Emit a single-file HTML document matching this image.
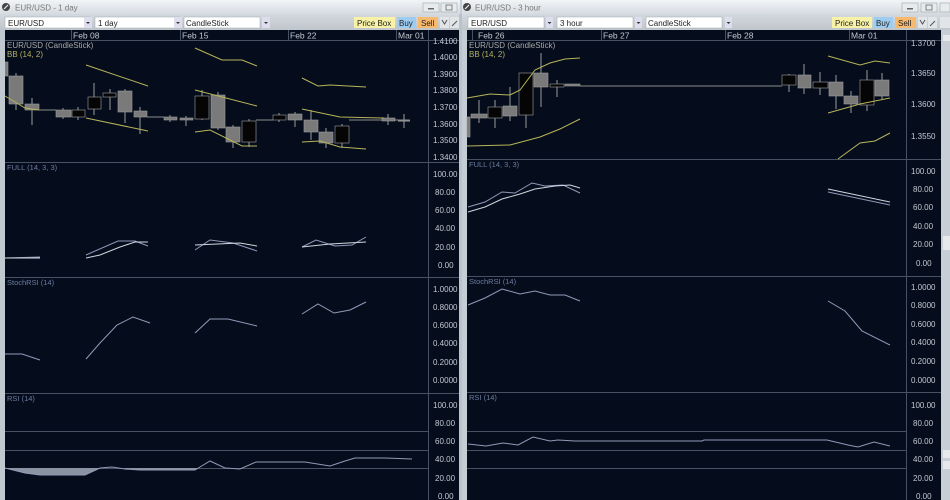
<!DOCTYPE html>
<html><head><meta charset="utf-8"><style>
html,body{margin:0;padding:0;width:950px;height:500px;overflow:hidden;background:#c4ccd4}
svg{display:block}
text{font-family:"Liberation Sans",sans-serif}
.ax{font-size:8px;fill:#c4c8d0}
.dt{font-size:8.5px;fill:#c4c8d0}
.ind{font-size:7.5px;fill:#6c7ca0}
.tb{font-size:8px;fill:#222}
.g{stroke:#465264;stroke-width:1;fill:none}
.cg{fill:#7a7a7a;stroke:#9a9a9a;stroke-width:0.6}
.cb{fill:#050505;stroke:#a0a0a0;stroke-width:0.6}
.w{stroke:#9a9a9a;stroke-width:1}
.bb{stroke:#b8b45a;stroke-width:1;fill:none}
.l1{stroke:#909ab8;stroke-width:1;fill:none}
.l2{stroke:#d0d6e0;stroke-width:1;fill:none}
</style></head><body>
<svg width="950" height="500" viewBox="0 0 950 500" xmlns="http://www.w3.org/2000/svg">
<defs>
<linearGradient id="tg" x1="0" y1="0" x2="0" y2="1"><stop offset="0" stop-color="#f2f4f6"/><stop offset="1" stop-color="#d6dbe1"/></linearGradient>
<linearGradient id="bg2" x1="0" y1="0" x2="0" y2="1"><stop offset="0" stop-color="#d4d9df"/><stop offset="1" stop-color="#bfc5cc"/></linearGradient>
</defs>
<rect width="950" height="500" fill="#c4ccd4"/>

<rect x="0" y="0" width="460" height="14" fill="url(#tg)"/>
<circle cx="6" cy="7" r="4" fill="#444"/><path d="M4 9 L8 5" stroke="#eee" stroke-width="1.2"/>
<text x="15" y="10.5" font-size="8" fill="#777">EUR/USD - 1 day</text>
<rect x="423" y="3" width="16" height="9" fill="#e8ebee" stroke="#9aa" stroke-width="0.6"/><rect x="428" y="8" width="6" height="1.5" fill="#666"/>
<rect x="441" y="3" width="16" height="9" fill="#e8ebee" stroke="#9aa" stroke-width="0.6"/><rect x="446" y="5" width="6" height="5" fill="none" stroke="#666" stroke-width="0.8"/>
<rect x="0" y="14" width="460" height="16" fill="url(#bg2)"/>
<rect x="5" y="17" width="85" height="11" fill="#fff" stroke="#9aa" stroke-width="0.5"/><rect x="84" y="17" width="8" height="11" fill="#dde"/><path d="M86 22h4l-2 2z" fill="#333"/>
<text x="8" y="26" class="tb">EUR/USD</text>
<rect x="95" y="17" width="85" height="11" fill="#fff" stroke="#9aa" stroke-width="0.5"/><rect x="174" y="17" width="8" height="11" fill="#dde"/><path d="M176 22h4l-2 2z" fill="#333"/>
<text x="98" y="26" class="tb">1 day</text>
<rect x="184" y="17" width="76" height="11" fill="#fff" stroke="#9aa" stroke-width="0.5"/><rect x="262" y="17" width="8" height="11" fill="#dde"/><path d="M264 22h4l-2 2z" fill="#333"/>
<text x="186" y="26" class="tb">CandleStick</text>
<rect x="354" y="17" width="41" height="11" fill="#f8f2a6"/><text x="357" y="26" class="tb">Price Box</text>
<rect x="397" y="17" width="19" height="11" fill="#9ccdf0"/><text x="399" y="26" class="tb" fill="#1a3a80">Buy</text>
<rect x="418" y="17" width="20" height="11" fill="#f6b96e"/><text x="421" y="26" class="tb">Sell</text>
<rect x="440" y="17" width="9" height="11" fill="#e2e5e8"/><path d="M442 20l2.5 4 2.5-4" stroke="#555" fill="none"/>
<rect x="450" y="17" width="9" height="11" fill="#e2e5e8"/><path d="M452 26l5-5" stroke="#555"/>

<rect x="5" y="30" width="454" height="470" fill="#050d1c"/>
<line x1="5" y1="40.5" x2="459" y2="40.5" class="g"/>
<line x1="428.5" y1="30" x2="428.5" y2="500" class="g"/>
<line x1="71.5" y1="30" x2="71.5" y2="40" class="g"/><line x1="180.5" y1="30" x2="180.5" y2="40" class="g"/><line x1="288.5" y1="30" x2="288.5" y2="40" class="g"/><line x1="396.5" y1="30" x2="396.5" y2="40" class="g"/>
<text x="73" y="38.5" class="dt">Feb 08</text><text x="182" y="38.5" class="dt">Feb 15</text><text x="290" y="38.5" class="dt">Feb 22</text><text x="398" y="38.5" class="dt">Mar 01</text>
<line x1="5" y1="162.5" x2="459" y2="162.5" class="g"/><line x1="5" y1="277.5" x2="459" y2="277.5" class="g"/><line x1="5" y1="393.5" x2="459" y2="393.5" class="g"/>
<line x1="5" y1="431.5" x2="428" y2="431.5" class="g"/><line x1="5" y1="450.5" x2="428" y2="450.5" class="g"/><line x1="5" y1="468.5" x2="428" y2="468.5" class="g"/>
<g class="ax">
<text x="433" y="44">1.4100</text><text x="433" y="60">1.4000</text><text x="433" y="77">1.3900</text><text x="433" y="93">1.3800</text><text x="433" y="110">1.3700</text><text x="433" y="127">1.3600</text><text x="433" y="143">1.3500</text><text x="433" y="160">1.3400</text>
<text x="433" y="177">100.00</text><text x="435" y="195">80.00</text><text x="435" y="213">60.00</text><text x="435" y="231">40.00</text><text x="435" y="250">20.00</text><text x="438" y="268">0.00</text>
<text x="433" y="292">1.0000</text><text x="433" y="310">0.8000</text><text x="433" y="328">0.6000</text><text x="433" y="346">0.4000</text><text x="433" y="365">0.2000</text><text x="433" y="383">0.0000</text>
<text x="433" y="408">100.00</text><text x="435" y="426">80.00</text><text x="435" y="444">60.00</text><text x="435" y="462">40.00</text><text x="435" y="481">20.00</text><text x="438" y="499">0.00</text>
</g>
<text x="7" y="48" font-size="8" fill="#a8a8a8">EUR/USD (CandleStick)</text>
<text x="7" y="57" font-size="8" fill="#b4b060">BB (14, 2)</text>
<text x="7" y="170" class="ind">FULL (14, 3, 3)</text>
<text x="7" y="285" class="ind">StochRSI (14)</text>
<text x="7" y="401" class="ind">RSI (14)</text>
<path d="M39 110H56 M147 117H164 M256 120H273 M349 120H382 M395 120H410" stroke="#8a8a8a" stroke-width="1"/>
<path d="M16 73V110 M32 98V125 M63 108V119 M78 107V120 M94 83V115 M110 89V110 M125 89V123 M140 107V134 M170 115V122 M186 116V126 M202 90V120 M218 92V130 M233 125V148 M249 119V147 M279 113V122 M295 112V127 M311 110V140 M326 128V148 M342 124V148 M388 114V125 M404 114V128 M398 121H410" class="w"/>
<rect x="5" y="62" width="3" height="14" class="cg"/>
<rect x="9" y="76" width="14" height="28" class="cg"/>
<rect x="25" y="104" width="14" height="6" class="cg"/>
<rect x="56" y="110" width="15" height="7" class="cg"/>
<rect x="72" y="110" width="13" height="7" class="cb"/>
<rect x="88" y="97" width="13" height="12" class="cb"/>
<rect x="103" y="93" width="13" height="4" class="cb"/>
<rect x="118" y="91" width="14" height="21" class="cg"/>
<rect x="134" y="111" width="13" height="6" class="cg"/>
<rect x="164" y="117" width="13" height="3" class="cg"/>
<rect x="180" y="118" width="13" height="2" class="cg"/>
<rect x="195" y="96" width="14" height="23" class="cb"/>
<rect x="211" y="95" width="14" height="33" class="cg"/>
<rect x="226" y="127" width="14" height="15" class="cg"/>
<rect x="242" y="121" width="14" height="21" class="cb"/>
<rect x="273" y="115" width="13" height="5" class="cb"/>
<rect x="288" y="114" width="14" height="6" class="cg"/>
<rect x="304" y="120" width="14" height="12" class="cg"/>
<rect x="319" y="132" width="14" height="11" class="cg"/>
<rect x="335" y="126" width="14" height="17" class="cb"/>
<rect x="382" y="118" width="13" height="3" class="cg"/>
<path class="bb" d="M86 65L148 86 M195 48L222 60L242 60L257 66 M302 78L318 86L330 85L366 87"/>
<path class="bb" d="M5 96L25 108L39 110 M195 90L257 106 M302 109L340 117L384 118"/>
<path class="bb" d="M86 118L148 131 M195 132L210 130L242 146L257 146 M302 142L320 141L340 147L366 149"/>
<path class="l1" d="M5 258L40 257 M86 255L118 241L135 241L148 246 M195 250L210 240L233 243L257 251 M302 247L316 240L335 246L352 245L366 237"/>
<path class="l2" d="M5 258L40 258 M86 258L100 255L120 247L135 242L148 242 M195 245L240 243L257 246 M302 247L330 244L366 242"/>
<path class="l1" d="M5 354L22 354L40 360 M86 359L100 343L117 325L133 317L150 323 M195 333L210 319L228 319L257 326 M302 314L318 304L334 313L350 310L366 302"/>
<path d="M5 468L25 473L40 475L85 475L100 468Z M125 469L140 470L195 470L198 468L125 468Z" fill="#8a93a2"/>
<path class="l1" d="M5 468L25 473L40 475L85 475L100 468L112 467L125 469L140 470L195 470L210 461L225 468L240 469L256 462L305 462L330 466L345 461L355 458L385 458L412 459"/>

<rect x="459" y="14" width="3" height="486" fill="#b9c3cd"/>
<rect x="0" y="30" width="5" height="470" fill="#c0c8d0"/>

<rect x="462" y="0" width="488" height="14" fill="url(#tg)"/>
<circle cx="467" cy="7" r="4" fill="#444"/><path d="M465 9L469 5" stroke="#eee" stroke-width="1.2"/>
<text x="475" y="10.5" font-size="8" fill="#777">EUR/USD - 3 hour</text>
<rect x="902" y="3" width="16" height="9" fill="#e8ebee" stroke="#9aa" stroke-width="0.6"/><rect x="907" y="8" width="6" height="1.5" fill="#666"/>
<rect x="921" y="3" width="16" height="9" fill="#e8ebee" stroke="#9aa" stroke-width="0.6"/><rect x="926" y="5" width="6" height="5" fill="none" stroke="#666" stroke-width="0.8"/>
<rect x="940" y="3" width="10" height="9" fill="#e8ebee" stroke="#9aa" stroke-width="0.6"/>
<rect x="462" y="14" width="488" height="16" fill="url(#bg2)"/>
<rect x="468" y="17" width="76" height="11" fill="#fff" stroke="#9aa" stroke-width="0.5"/><rect x="546" y="17" width="7" height="11" fill="#dde"/><path d="M547.5 22h4l-2 2z" fill="#333"/>
<text x="471" y="26" class="tb">EUR/USD</text>
<rect x="557" y="17" width="76" height="11" fill="#fff" stroke="#9aa" stroke-width="0.5"/><rect x="635" y="17" width="7" height="11" fill="#dde"/><path d="M636.5 22h4l-2 2z" fill="#333"/>
<text x="560" y="26" class="tb">3 hour</text>
<rect x="646" y="17" width="76" height="11" fill="#fff" stroke="#9aa" stroke-width="0.5"/><rect x="725" y="17" width="7" height="11" fill="#dde"/><path d="M726.5 22h4l-2 2z" fill="#333"/>
<text x="648" y="26" class="tb">CandleStick</text>
<rect x="832" y="17" width="40" height="11" fill="#f8f2a6"/><text x="835" y="26" class="tb">Price Box</text>
<rect x="874" y="17" width="19" height="11" fill="#9ccdf0"/><text x="876" y="26" class="tb" fill="#1a3a80">Buy</text>
<rect x="895" y="17" width="21" height="11" fill="#f6b96e"/><text x="898" y="26" class="tb">Sell</text>
<rect x="918" y="17" width="9" height="11" fill="#e2e5e8"/><path d="M920 20l2.5 4 2.5-4" stroke="#555" fill="none"/>
<rect x="928" y="17" width="9" height="11" fill="#e2e5e8"/><path d="M930 26l5-5" stroke="#555"/>
<rect x="940" y="17" width="10" height="11" fill="#e2e5e8"/>

<rect x="467" y="30" width="474" height="470" fill="#050d1c"/>
<line x1="467" y1="40.5" x2="941" y2="40.5" class="g"/>
<line x1="906.5" y1="30" x2="906.5" y2="500" class="g"/>
<line x1="601.5" y1="30" x2="601.5" y2="40" class="g"/><line x1="725.5" y1="30" x2="725.5" y2="40" class="g"/><line x1="849.5" y1="30" x2="849.5" y2="40" class="g"/><line x1="472.5" y1="30" x2="472.5" y2="40" class="g"/>
<text x="478" y="38.5" class="dt">Feb 26</text><text x="603" y="38.5" class="dt">Feb 27</text><text x="727" y="38.5" class="dt">Feb 28</text><text x="851" y="38.5" class="dt">Mar 01</text>
<line x1="467" y1="159.5" x2="941" y2="159.5" class="g"/><line x1="467" y1="276.5" x2="941" y2="276.5" class="g"/><line x1="467" y1="392.5" x2="941" y2="392.5" class="g"/>
<line x1="467" y1="431.5" x2="906" y2="431.5" class="g"/><line x1="467" y1="450.5" x2="906" y2="450.5" class="g"/><line x1="467" y1="468.5" x2="906" y2="468.5" class="g"/>
<g class="ax">
<text x="911" y="46">1.3700</text><text x="911" y="76">1.3650</text><text x="911" y="107">1.3600</text><text x="911" y="139">1.3550</text>
<text x="911" y="174">100.00</text><text x="913" y="192">80.00</text><text x="913" y="210">60.00</text><text x="913" y="229">40.00</text><text x="913" y="247">20.00</text><text x="916" y="266">0.00</text>
<text x="911" y="290">1.0000</text><text x="911" y="308">0.8000</text><text x="911" y="327">0.6000</text><text x="911" y="345">0.4000</text><text x="911" y="364">0.2000</text><text x="911" y="383">0.0000</text>
<text x="911" y="408">100.00</text><text x="913" y="426">80.00</text><text x="913" y="444">60.00</text><text x="913" y="462">40.00</text><text x="913" y="481">20.00</text><text x="916" y="499">0.00</text>
</g>
<text x="469" y="48" font-size="8" fill="#a8a8a8">EUR/USD (CandleStick)</text>
<text x="469" y="57" font-size="8" fill="#b4b060">BB (14, 2)</text>
<text x="469" y="167" class="ind">FULL (14, 3, 3)</text>
<text x="469" y="284" class="ind">StochRSI (14)</text>
<text x="469" y="400" class="ind">RSI (14)</text>
<path d="M580 86H782" stroke="#8a8a8a" stroke-width="1"/>
<path d="M469 117V137 M479 100V123 M495 100V128 M510 87V121 M526 73V128 M541 53V107 M557 80V97 M789 74V92 M804 64V94 M820 72V95 M836 75V109 M851 91V113 M867 70V111 M882 73V99" class="w"/>
<rect x="467" y="117" width="3" height="20" class="cg"/>
<rect x="471" y="114" width="16" height="4" class="cg"/>
<rect x="488" y="107" width="14" height="11" class="cb"/>
<rect x="503" y="106" width="14" height="10" class="cg"/>
<rect x="519" y="73" width="14" height="42" class="cb"/>
<rect x="534" y="73" width="14" height="14" class="cg"/>
<rect x="550" y="84" width="14" height="3" class="cb"/>
<rect x="565" y="84" width="15" height="2" class="cg"/>
<rect x="782" y="75" width="14" height="10" class="cb"/>
<rect x="798" y="75" width="13" height="13" class="cg"/>
<rect x="813" y="82" width="15" height="6" class="cb"/>
<rect x="829" y="82" width="14" height="14" class="cg"/>
<rect x="844" y="96" width="14" height="8" class="cg"/>
<rect x="860" y="80" width="14" height="25" class="cb"/>
<rect x="875" y="80" width="14" height="16" class="cg"/>
<path class="bb" d="M467 98L490 94L510 95L520 90L535 70L550 63L565 59L580 58 M828 56L860 65L875 61L890 63"/>
<path class="bb" d="M467 146L510 145L540 137L560 129L580 119 M828 113L860 104L890 98"/>
<path class="bb" d="M838 159L860 143L875 141L890 133"/>
<path class="l1" d="M468 207L485 202L502 192L515 193L532 183L545 186L563 185L580 193 M828 192L890 205"/>
<path class="l2" d="M468 212L485 207L502 199L520 194L535 189L555 186L570 185L580 188 M828 189L890 202"/>
<path class="l1" d="M468 305L485 298L502 289L520 294L535 291L550 295L565 295L580 301 M828 301L845 311L862 331L890 345"/>
<path class="l1" d="M468 444L486 446L503 443L518 445L533 437L550 441L558 440L575 441L702 441L704 440L827 440L848 445L858 447L874 442L890 446"/>

<rect x="941" y="30" width="9" height="470" fill="#c8ced5"/>
<rect x="943" y="35" width="7" height="6" fill="#e6e9ec"/>
<rect x="943" y="236" width="7" height="14" fill="#e6e9ec"/>
<rect x="943" y="450" width="7" height="8" fill="#e6e9ec"/><rect x="943" y="461" width="7" height="8" fill="#e6e9ec"/>
</svg>
</body></html>
